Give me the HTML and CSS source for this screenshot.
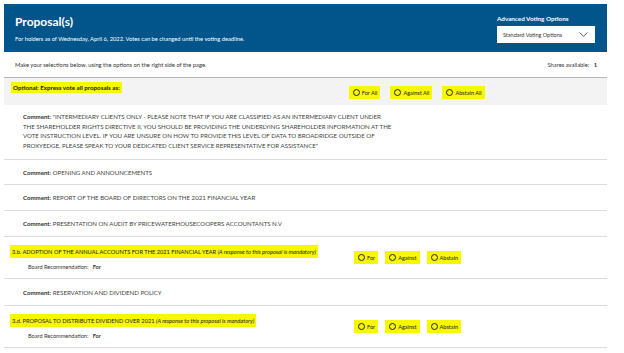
FILE: index.html
```html
<!DOCTYPE html>
<html>
<head>
<meta charset="utf-8">
<link rel="stylesheet" href="styles.css">
</head>
<body>
<div class="page">
  <header class="hdr">
    <div class="hdr-left">
      <h1 class="title">Proposal(s)</h1>
      <p class="sub">For holders as of Wednesday, April 6, 2022. Votes can be changed until the voting deadline.</p>
    </div>
    <div class="hdr-right">
      <div class="adv">Advanced Voting Options</div>
      <div class="select">
        <span>Standard Voting Options</span>
        <svg class="chev" width="9" height="5" viewBox="0 0 9 5"><path d="M0.5 0.5 L4.5 4.3 L8.5 0.5" fill="none" stroke="#333" stroke-width="0.8"/></svg>
      </div>
    </div>
  </header>

  <div class="intro">
    <span>Make your selections below, using the options on the right side of the page.</span>
    <span class="shares">Shares available:&nbsp;&nbsp;&nbsp;<b>1</b></span>
  </div>

  <div class="express">
    <span class="hl bold express-label">Optional: Express vote all proposals as:</span>
    <div class="opts opts-all">
      <span class="hl opt"><i class="radio"></i>For All</span>
      <span class="hl opt"><i class="radio"></i>Against All</span>
      <span class="hl opt"><i class="radio"></i>Abstain All</span>
    </div>
  </div>

  <div class="row comment long">
    <div class="lines">
      <div><b>Comment:</b> "INTERMEDIARY CLIENTS ONLY - PLEASE NOTE THAT IF YOU ARE CLASSIFIED AS AN INTERMEDIARY CLIENT UNDER</div>
      <div>THE SHAREHOLDER RIGHTS DIRECTIVE II, YOU SHOULD BE PROVIDING THE UNDERLYING SHAREHOLDER INFORMATION AT THE</div>
      <div>VOTE INSTRUCTION LEVEL. IF YOU ARE UNSURE ON HOW TO PROVIDE THIS LEVEL OF DATA TO BROADRIDGE OUTSIDE OF</div>
      <div>PROXYEDGE, PLEASE SPEAK TO YOUR DEDICATED CLIENT SERVICE REPRESENTATIVE FOR ASSISTANCE"</div>
    </div>
  </div>

  <div class="row comment r25"><div><b>Comment:</b> OPENING AND ANNOUNCEMENTS</div></div>
  <div class="row comment r26"><div><b>Comment:</b> REPORT OF THE BOARD OF DIRECTORS ON THE 2021 FINANCIAL YEAR</div></div>
  <div class="row comment r26"><div><b>Comment:</b> PRESENTATION ON AUDIT BY PRICEWATERHOUSECOOPERS ACCOUNTANTS N.V</div></div>

  <div class="row proposal">
    <div class="prop-left">
      <div class="hl prop-title">3.b. ADOPTION OF THE ANNUAL ACCOUNTS FOR THE 2021 FINANCIAL YEAR <em>(A response to this proposal is mandatory)</em></div>
      <div class="rec">Board Recommendation:&nbsp;&nbsp;&nbsp;<b>For</b></div>
    </div>
    <div class="opts opts-prop">
      <span class="hl opt"><i class="radio"></i>For</span>
      <span class="hl opt"><i class="radio"></i>Against</span>
      <span class="hl opt"><i class="radio"></i>Abstain</span>
    </div>
  </div>

  <div class="row comment r27"><div><b>Comment:</b> RESERVATION AND DIVIDEND POLICY</div></div>

  <div class="row proposal">
    <div class="prop-left">
      <div class="hl prop-title">3.d. PROPOSAL TO DISTRIBUTE DIVIDEND OVER 2021 <em>(A response to this proposal is mandatory)</em></div>
      <div class="rec">Board Recommendation:&nbsp;&nbsp;&nbsp;<b>For</b></div>
    </div>
    <div class="opts opts-prop">
      <span class="hl opt"><i class="radio"></i>For</span>
      <span class="hl opt"><i class="radio"></i>Against</span>
      <span class="hl opt"><i class="radio"></i>Abstain</span>
    </div>
  </div>
</div>
</body>
</html>
```

FILE: styles.css
```css
* { box-sizing: border-box; }
html, body { margin: 0; padding: 0; background: #fff; }
body {
  font-family: "Lato", "Open Sans", sans-serif;
  color: #333;
  font-size: 5.8px;
}
.page {
  width: 603px;
  margin: 4px 0 0 4px;
}
.hdr {
  height: 48px;
  background: #02558b;
  color: #fff;
  display: flex;
  justify-content: space-between;
  padding: 0 12px 0 11px;
}
.hdr-left { padding-top: 11px; }
.title {
  margin: 0;
  font-size: 12px;
  font-weight: 700;
  line-height: 14px;
}
.sub {
  margin: 6px 0 0;
  font-size: 5.75px;
  line-height: 7px;
}
.hdr-right { padding-top: 11px; width: 98px; }
.adv {
  font-size: 6.3px;
  font-weight: 700;
  line-height: 8px;
  margin-bottom: 3px;
  white-space: nowrap;
}
.select {
  height: 17px;
  background: #fff;
  color: #333;
  display: flex;
  align-items: center;
  justify-content: space-between;
  padding: 0 7px 0 6px;
  font-size: 5.5px;
}
.chev { display: block; }
.intro {
  height: 26px;
  display: flex;
  justify-content: space-between;
  align-items: center;
  padding: 0 10px 0 11px;
  border-bottom: 1px solid #b5b5b5;
}
.shares b { font-weight: 700; }
.express {
  height: 27px;
  background: #f3f3f3;
  display: flex;
  align-items: center;
  padding: 0 0 3px 7px;
}
.hl {
  background: #f7f700;
}
.bold { font-weight: 700; }
.express-label {
  padding: 2px 2px;
  color: #222;
  margin-top: -6px;
  font-size: 6.2px;
}
.opts {
  display: flex;
  align-items: center;
}
.opts-all { margin-left: 227px; gap: 10px; margin-top: 4px; }
.opts-all .opt { font-size: 5.6px; }
.opt {
  display: inline-flex;
  align-items: center;
  gap: 2px;
  padding: 3px 3px 3px 4px;
  color: #222;
}
.radio {
  display: inline-block;
  width: 7px;
  height: 7px;
  border: 0.8px solid #222;
  border-radius: 50%;
}
.row {
  border-bottom: 1.5px solid #dcdcdc;
  display: flex;
  align-items: center;
}
.comment { padding-left: 19px; color: #444; font-size: 6.1px; }
.comment b { color: #333; }
.long { height: 55px; align-items: flex-start; padding-top: 7px; }
.lines div { line-height: 9.6px; white-space: nowrap; }
.r25 { height: 25px; }
.r26 { height: 26px; }
.r27 { height: 27px; }
.proposal {
  height: 42px;
  align-items: flex-start;
  padding-left: 6px;
  padding-top: 8px;
}
.prop-left { width: 340px; }
.prop-title {
  display: inline-block;
  padding: 3px 2px;
  color: #222;
  font-size: 5.7px;
  white-space: nowrap;
}
.prop-title em { font-style: italic; }
.rec {
  padding-left: 18px;
  margin-top: 5px;
  color: #333;
  font-size: 5.6px;
}
.opts-prop { gap: 7px; margin-top: 6px; margin-left: 4px; }
.opts-prop .opt { font-size: 5.6px; }
```
